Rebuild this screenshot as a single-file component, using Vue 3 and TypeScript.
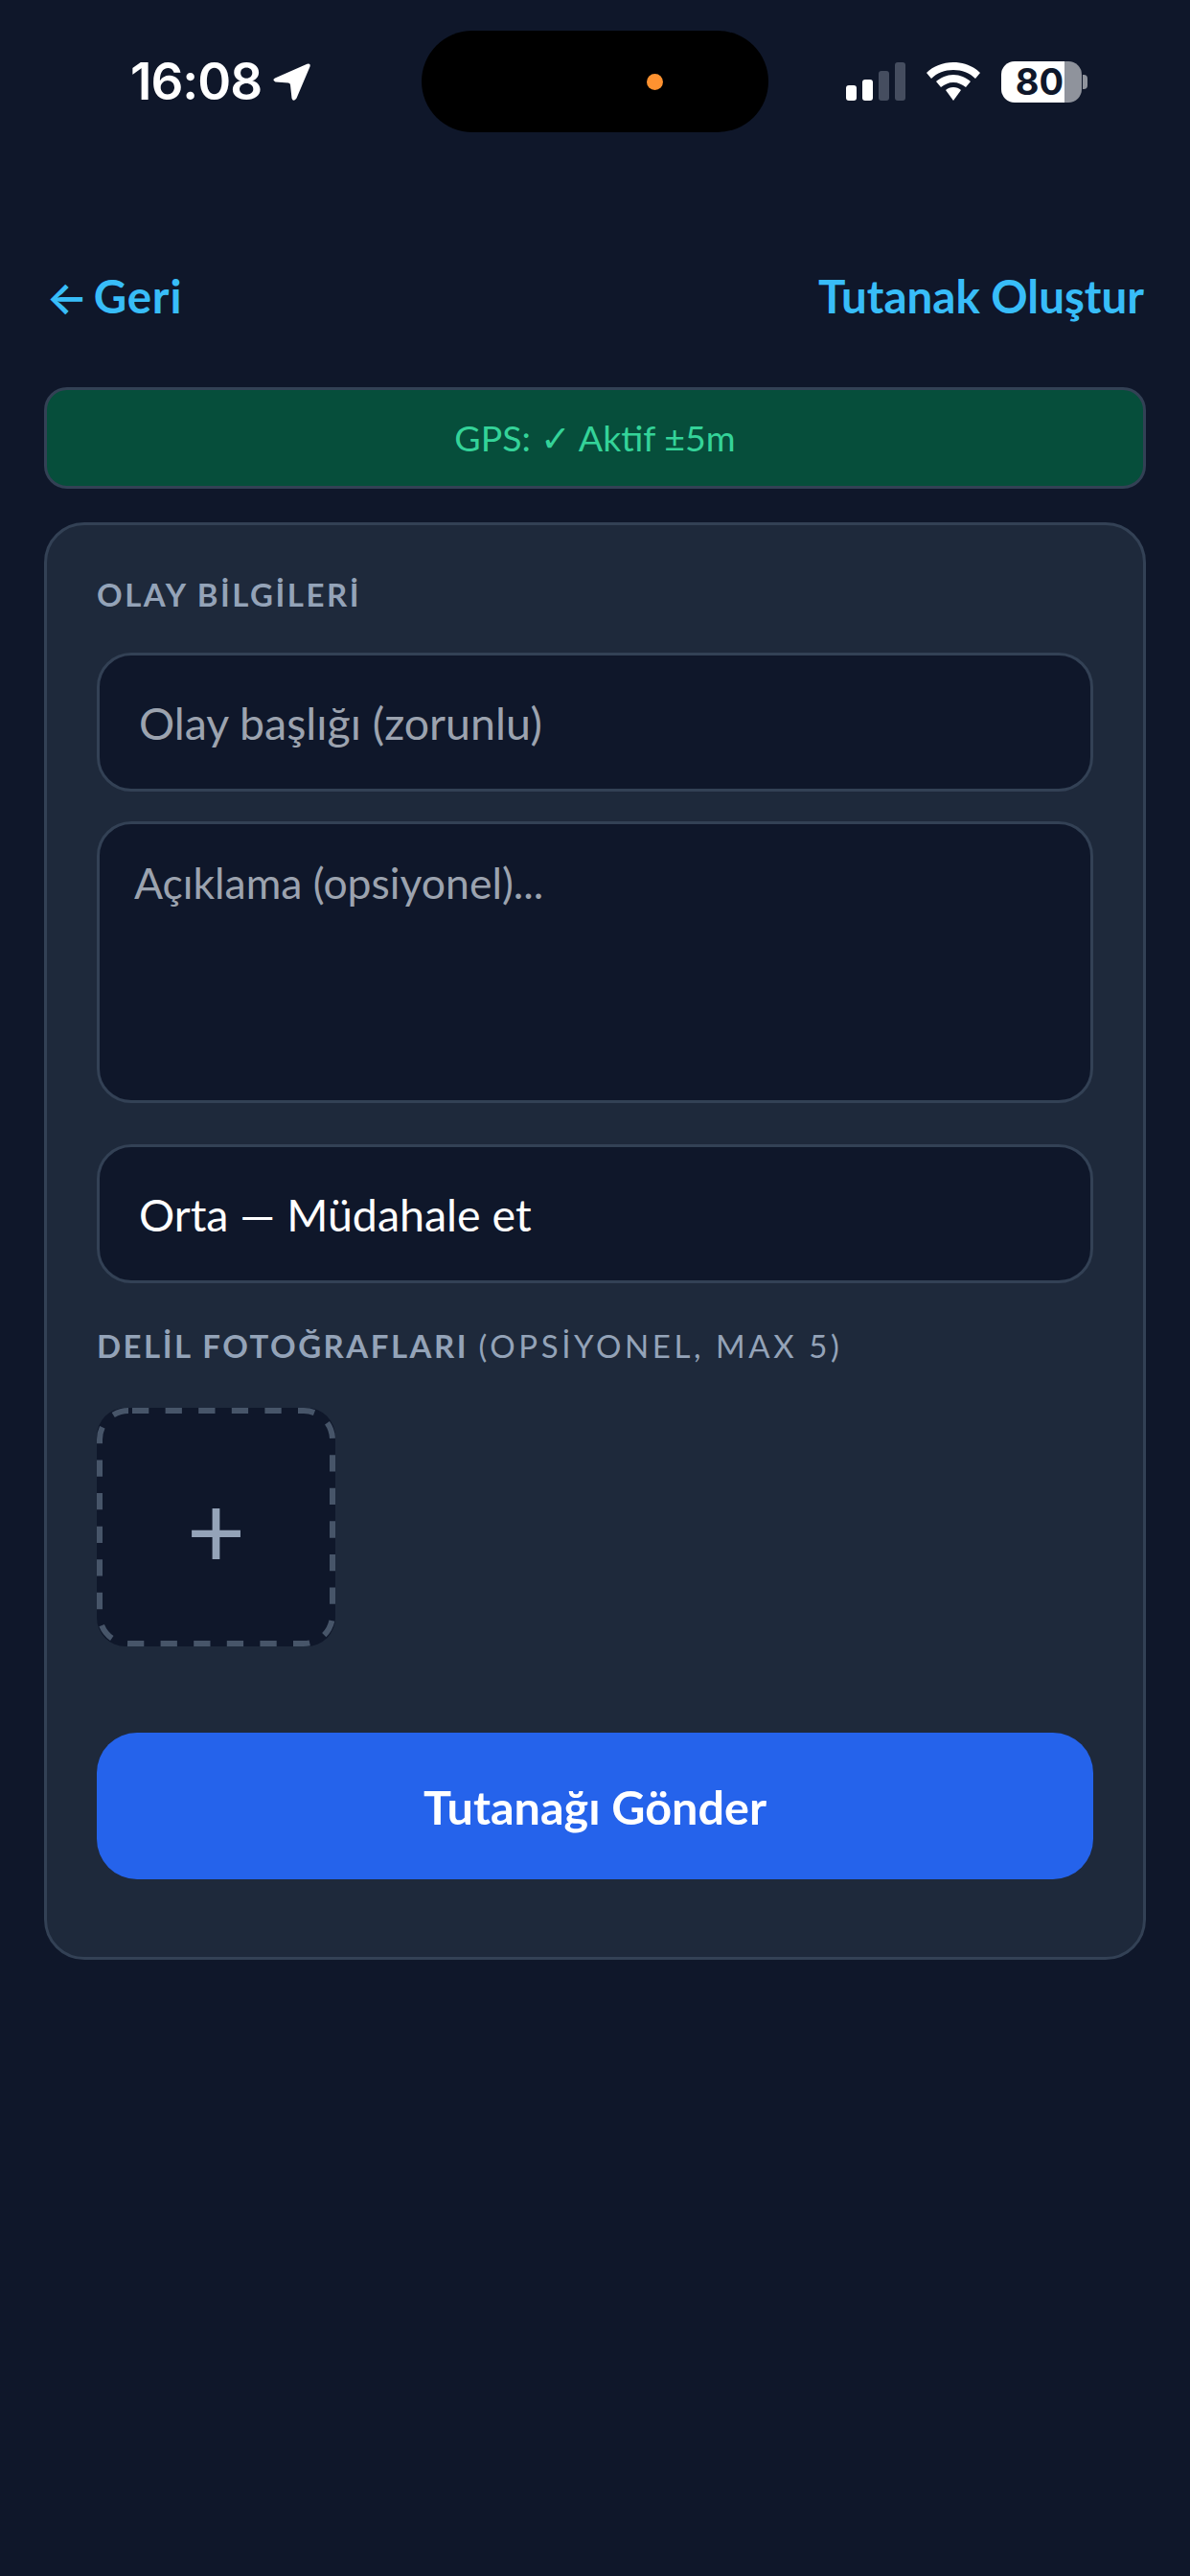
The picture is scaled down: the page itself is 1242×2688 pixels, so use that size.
<script setup lang="ts">
const bars: { h: number; on: boolean }[] = [
  { h: 16, on: true },
  { h: 22, on: true },
  { h: 31, on: false },
  { h: 40, on: false },
]
</script>

<template>
  <div class="page">
    <div class="status">
      <div class="time-wrap">
        <span class="time">16:08</span>
        <svg class="loc" viewBox="0 0 39 39" width="39" height="39">
          <path d="M35.500 0.800 Q39.500 -0.500 38.500 3.500 L24.500 36.500 Q21 41 19.500 36.500 L18 22.500 Q18 20.800 16 20.500 L2.500 19.500 Q-1.500 17.500 2 15.500 Z" fill="#fff" />
        </svg>
      </div>
      <div class="island"><span class="dot"></span></div>
      <div class="sys">
        <div class="signal">
          <span v-for="(b, i) in bars" :key="i" class="bar" :class="{ on: b.on }" :style="{ height: b.h + 'px' }"></span>
        </div>
        <svg class="wifi" viewBox="0 0 56 40" width="56" height="40">
          <path d="M28 0 C39 0 49 4 56 11 L51 17 C45 11 37 8 28 8 C19 8 11 11 5 17 L0 11 C7 4 17 0 28 0 Z" fill="#fff" />
          <path d="M28 13 C35 13 41 16 46 20 L41 26 C37 23 33 21 28 21 C23 21 19 23 15 26 L10 20 C15 16 21 13 28 13 Z" fill="#fff" />
          <path d="M28 26 C31 26 34 27 36 29 L28 40 L20 29 C22 27 25 26 28 26 Z" fill="#fff" />
        </svg>
        <div class="battery">
          <div class="cell"><span class="pct">80</span></div>
          <span class="nub"></span>
        </div>
      </div>
    </div>

    <header class="head">
      <span class="link back"><span class="arrow">←</span>Geri</span>
      <span class="link">Tutanak Oluştur</span>
    </header>

    <div class="gps">GPS: ✓ Aktif ±5m</div>

    <section class="card">
      <div class="label first">OLAY BİLGİLERİ</div>
      <div class="field ph">Olay başlığı (zorunlu)</div>
      <div class="area ph">Açıklama (opsiyonel)...</div>
      <div class="field sel">Orta — Müdahale et</div>
      <div class="label second">DELİL FOTOĞRAFLARI <span class="thin">(OPSİYONEL, MAX 5)</span></div>
      <div class="add">
        <svg class="dash" viewBox="0 0 249 249" width="249" height="249">
          <rect x="3" y="3" width="243" height="243" rx="30" ry="30" fill="none" stroke="#475569" stroke-width="6" stroke-dasharray="17.300 17.300" stroke-dashoffset="-4" />
        </svg>
        <span class="plus">+</span>
      </div>
      <div class="btn">Tutanağı Gönder</div>
    </section>
  </div>
</template>

<style>
html, body { margin: 0; background: #0f172a; }
</style>

<style scoped>
.page {
  width: 1242px;
  height: 2688px;
  background: #0f172a;
  font-family: Lato, "Noto Sans", sans-serif;
  box-sizing: border-box;
  overflow: hidden;
}
.status {
  display: grid;
  grid-template-columns: 440px 362px 1fr;
  height: 106px;
  padding-top: 32px;
}
.time-wrap {
  display: flex;
  align-items: center;
  padding-left: 136px;
  gap: 12px;
}
.time {
  font-family: Inter, sans-serif;
  font-weight: 600;
  font-size: 53px;
  line-height: 1;
  letter-spacing: -1px;
  color: #fff;
}
.island {
  background: #000;
  border-radius: 53px;
  display: flex;
  align-items: center;
  justify-content: flex-end;
  padding-right: 110px;
}
.dot {
  width: 17px;
  height: 17px;
  border-radius: 50%;
  background: #ff9230;
}
.sys {
  display: flex;
  align-items: center;
  padding-left: 81px;
}
.signal {
  display: flex;
  align-items: flex-end;
  gap: 6px;
  height: 40px;
  width: 63px;
}
.bar {
  width: 11px;
  border-radius: 3px;
  background: #454d5f;
}
.bar.on { background: #fff; }
.wifi { margin-left: 21px; }
.battery {
  display: flex;
  align-items: center;
  margin-left: 22px;
  gap: 1px;
}
.cell {
  width: 84px;
  height: 43px;
  border-radius: 14px;
  background: linear-gradient(90deg, #fff 0 66px, #8f939c 66px);
  display: flex;
  align-items: center;
  justify-content: center;
  padding-right: 4px;
  box-sizing: border-box;
}
.pct {
  font-family: Inter, sans-serif;
  font-weight: 700;
  font-size: 38px;
  line-height: 1;
  color: #0f172a;
}
.nub {
  width: 5px;
  height: 15px;
  border-radius: 0 4px 4px 0;
  background: #8f939c;
}
.head {
  display: flex;
  justify-content: space-between;
  margin-top: 141px;
  padding: 0 48px 0 48px;
}
.link {
  font-weight: 700;
  font-size: 47.500px;
  line-height: 60px;
  color: #38bdf8;
}
.back { letter-spacing: 0.800px; }
.arrow {
  font-family: Inter, sans-serif;
  font-size: 46px;
  font-weight: 600;
  margin-right: 5px;
}
.gps {
  margin: 64px 46px 0;
  height: 106px;
  box-sizing: border-box;
  border: 3px solid #334155;
  border-radius: 24px;
  background: #064e3b;
  color: #34d399;
  font-size: 37.500px;
  display: flex;
  align-items: center;
  justify-content: center;
}
.card {
  margin: 35px 46px 0;
  height: 1500px;
  box-sizing: border-box;
  border: 3px solid #334155;
  border-radius: 42px;
  background: #1e293b;
  padding: 0 52px;
  display: flex;
  flex-direction: column;
}
.label {
  font-weight: 700;
  font-size: 33px;
  line-height: 40px;
  letter-spacing: 2.500px;
  color: #94a3b8;
}
.label.first { margin-top: 52px; }
.thin { font-weight: 400; letter-spacing: 3.600px; }
.field, .area {
  box-sizing: border-box;
  border: 3px solid #334155;
  border-radius: 36px;
  background: #0f172a;
}
.field {
  height: 145px;
  display: flex;
  align-items: center;
  padding-left: 41px;
  font-size: 46.500px;
}
.first + .field { margin-top: 41px; }
.area {
  height: 294px;
  margin-top: 31px;
  padding: 36px 36px 0;
  font-size: 44.500px;
  line-height: 50px;
}
.ph { color: #9ca3af; }
.sel { color: #fff; margin-top: 43px; }
.second { margin-top: 45px; }
.add {
  position: relative;
  margin-top: 45px;
  width: 249px;
  height: 249px;
  border-radius: 30px;
  background: #0f172a;
  display: flex;
  align-items: center;
  justify-content: center;
}
.dash {
  position: absolute;
  inset: 0;
}
.plus {
  font-size: 106px;
  line-height: 1;
  color: #94a3b8;
  margin-top: 2px;
}
.btn {
  margin-top: 90px;
  height: 153px;
  border-radius: 42px;
  background: #2563eb;
  color: #fff;
  font-weight: 700;
  font-size: 48.500px;
  display: flex;
  align-items: center;
  justify-content: center;
}
</style>
